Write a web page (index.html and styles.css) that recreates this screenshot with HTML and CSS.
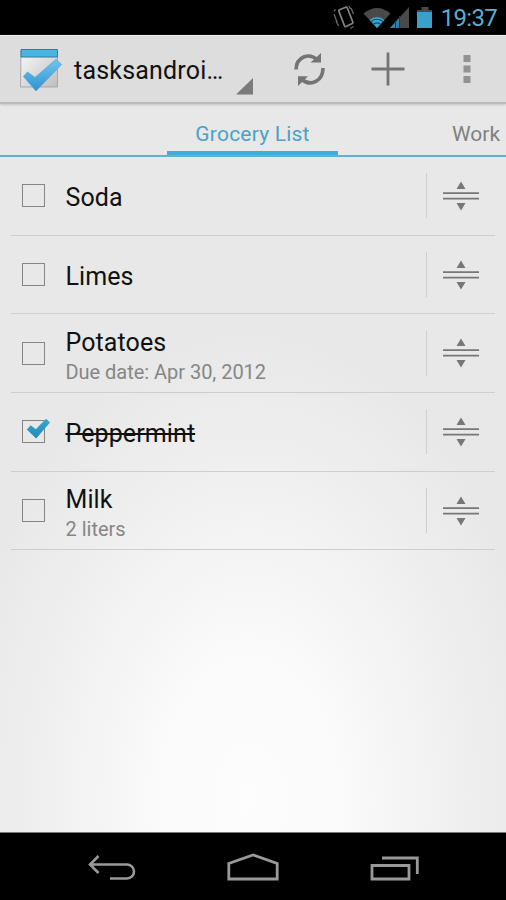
FILE: index.html
```html
<!DOCTYPE html>
<html lang="en">
<head>
<meta charset="utf-8">
<title>Tasks</title>
<link rel="stylesheet" href="styles.css">
</head>
<body>
<svg class="defs" width="0" height="0">
  <defs>
    <linearGradient id="blue" x1="0" y1="0" x2="0" y2="1"><stop offset="0" stop-color="#71c5ee"/><stop offset="1" stop-color="#2f93cf"/></linearGradient>
    <linearGradient id="paper" x1="0" y1="0" x2="1" y2="1"><stop offset="0" stop-color="#fafafa"/><stop offset="1" stop-color="#bdbdbd"/></linearGradient>
    <linearGradient id="tick" x1="0" y1="0" x2="0" y2="1"><stop offset="0" stop-color="#35a9d3"/><stop offset="1" stop-color="#2389b5"/></linearGradient>
    <symbol id="grip" viewBox="0 0 36 30">
      <path d="M18 .5l4.500 7.500h-9zM18 29.500l4.500-7.500h-9z" fill="#777"/>
      <path d="M0 12.200h36M0 17.600h36" stroke="#777" stroke-width="1.700"/>
    </symbol>
  </defs>
</svg>
<div class="phone">
  <header class="status">
    <svg class="status-icons" width="106" height="30" viewBox="330 3 106 30">
      <g fill="none" stroke="#858585">
        <path d="M339.500 9.800l6.200-2.600q1-.4 1.500.6l5.600 14.200q.4 1-.6 1.500l-6.200 2.900q-1 .4-1.500-.6l-5.600-14.500q-.4-1 .6-1.500z" stroke-width="1.700"/>
        <path d="M334 14l3 8M336 21l2.500 5M334 11l1.500-1.500M351 8l2.500 6M349 6l1.500 3M350.500 28.500l3-2" stroke="#686868" stroke-width="1.300"/>
      </g>
      <path d="M363.500 13.500Q377 2.500 390.500 13.500L377 28z" fill="#494949"/>
      <path d="M369.500 20Q377 14 384.500 20L377 28z" fill="#3ca5cf"/>
      <path d="M371 21.500Q377 17 383 21.500M373.500 24.200q3.500-2.600 7 0" fill="none" stroke="#174b60" stroke-width="1.200"/>
      <path d="M409 7v21h-19z" fill="#494949"/>
      <path d="M399.500 17.500V28H390z" fill="#347fa8"/>
      <path d="M395.500 21v7M399.500 16v12" stroke="#163f55" stroke-width="1"/>
      <path d="M421.500 7h7v3h3.500v4h-15v-4h4.500z" fill="#494949"/>
      <path d="M417 12h15v16h-15z" fill="#38a0c9"/>
    </svg>
    <span class="clock">19:37</span>
  </header>

  <div class="actionbar">
    <svg class="logo" width="44" height="46" viewBox="19 46 44 46">
      <path d="M21 50h36.500v36H20.500z" fill="url(#paper)" stroke="#a9a9a9" stroke-width="1"/>
      <path d="M21 48.500h36.500v7.500H21z" fill="#48b5e3" stroke="#35799b" stroke-width="1"/>
      <path d="M23.500 75.500l4-4.500 7.500 5.500L56 58.500l5.500 5L36 90z" fill="url(#blue)" stroke="#4ca5d6" stroke-width=".8" stroke-linejoin="round"/>
    </svg>
    <div class="account">tasksandroi…</div>
    <svg class="spinner" width="17" height="17" viewBox="0 0 17 17"><path d="M17 0v16.500H0z" fill="#7b7b7b"/></svg>
    <svg class="refresh" width="32" height="36" viewBox="294 52 32 36">
      <path d="M296 69.500C296.500 56.500 309 52.500 317 59.500M323 68C323 81 311 87 302 79.500" fill="none" stroke="#747474" stroke-width="3.600"/>
      <path d="M321 53v9.500h-10.500zM298 86v-9.800h10z" fill="#747474"/>
    </svg>
    <svg class="add" width="34" height="34" viewBox="0 0 34 34"><path d="M17 .5v33M.5 17h33" stroke="#747474" stroke-width="2.800"/></svg>
    <svg class="more" width="8" height="29" viewBox="0 0 8 29"><path d="M.5 0h7v7h-7zM.5 10.500h7v7h-7zM.5 21h7v7h-7z" fill="#929292"/></svg>
  </div>

  <nav class="tabs">
    <span class="tab tab-active">Grocery List</span>
    <span class="tab tab-next">Work</span>
  </nav>

  <main class="list">
    <div class="row">
      <span class="box"></span>
      <div class="label"><span class="name">Soda</span></div>
      <span class="handle"><svg width="36" height="30"><use href="#grip"/></svg></span>
    </div>
    <div class="row">
      <span class="box"></span>
      <div class="label"><span class="name">Limes</span></div>
      <span class="handle"><svg width="36" height="30"><use href="#grip"/></svg></span>
    </div>
    <div class="row">
      <span class="box"></span>
      <div class="label two"><span class="name">Potatoes</span><span class="note due">Due date: Apr 30, 2012</span></div>
      <span class="handle"><svg width="36" height="30"><use href="#grip"/></svg></span>
    </div>
    <div class="row">
      <span class="box"><svg class="tick" width="25" height="22" viewBox="0 0 25 22"><path d="M.8 11.500l4-4.300 5 4L20 .8 24 4.500 10.200 20.500z" fill="url(#tick)"/></svg></span>
      <div class="label"><span class="name done">Peppermint</span></div>
      <span class="handle"><svg width="36" height="30"><use href="#grip"/></svg></span>
    </div>
    <div class="row">
      <span class="box"></span>
      <div class="label two"><span class="name">Milk</span><span class="note">2 liters</span></div>
      <span class="handle"><svg width="36" height="30"><use href="#grip"/></svg></span>
    </div>
  </main>

  <footer class="navbar">
    <svg width="48" height="28" viewBox="0 0 48 28"><path d="M2 11.500h37a7 7 0 0 1 0 14H22M10.500 3L2 11.500l8.500 8.500" fill="none" stroke="#999" stroke-width="2.600"/></svg>
    <svg width="52" height="28" viewBox="0 0 52 28"><path d="M1.800 26V10.500L26 2l24.200 8.500V26z" fill="none" stroke="#999" stroke-width="2.800"/></svg>
    <svg width="49" height="28" viewBox="0 0 49 28"><path d="M2 12.500h37V26H2zM12 5h35.300v16" fill="none" stroke="#999" stroke-width="2.800"/></svg>
  </footer>
</div>
</body>
</html>
```
FILE: styles.css
```css
* { box-sizing: border-box; }
body { margin: 0; background: #000; font-family: Roboto, "Liberation Sans", sans-serif; }
svg { display: block; flex: none; }
.defs { position: absolute; }
.phone {
  width: 506px; height: 900px; overflow: hidden;
  display: flex; flex-direction: column;
  background: radial-gradient(ellipse 270px 430px at 250px 800px, #fdfdfd 0%, #fafafa 35%, #f0f0f0 75%, #e8e8e8 110%);
}
.status {
  height: 35px; flex: none; background: #000;
  display: flex; align-items: center; justify-content: flex-end; padding-right: 9px;
}
.status-icons { margin-right: 5px; }
.clock { color: #5aaed2; font-size: 24px; line-height: 34px; letter-spacing: -.7px; }
.actionbar {
  height: 69px; flex: none; display: flex; align-items: flex-start;
  background: #ddd; border-top: 1px solid #eee; border-bottom: 2px solid #bbb;
  box-shadow: 0 1px 2px #c4c4c4;
}
.logo { margin: 11px 0 0 19px; }
.account { width: 162px; margin-left: 11px; padding-top: 19px; font-size: 25px; line-height: 32px; letter-spacing: .2px; color: #111; white-space: nowrap; }
.spinner { margin: 42px 0 0 0; }
.refresh { margin: 16px 0 0 41px; }
.add { margin: 16px 0 0 45px; }
.more { margin: 19px 0 0 58px; }
.tabs {
  height: 53px; flex: none; display: flex; align-items: stretch; padding-left: 167px;
  border-bottom: 2px solid #5cb4d4; overflow: hidden;
}
.tab { font-size: 21px; line-height: 60px; white-space: nowrap; }
.tab-active {
  width: 171px; height: 53px; text-align: center; letter-spacing: .2px; color: #4aa3c7;
  background: linear-gradient(#42aed5, #42aed5) bottom / 100% 6px no-repeat;
}
.tab-next { margin-left: 114px; color: #808080; }
.list { flex: 1; padding: 0 11px; }
.row { height: 78.700px; display: flex; align-items: center; border-bottom: 1.500px solid #cecece; padding-left: 11px; }
.box { width: 23px; height: 23px; flex: none; border: 1.500px solid #858585; position: relative; }
.tick { position: absolute; left: 3px; top: -3px; }
.label { flex: 1; margin-left: 20.500px; padding-top: 4px; display: flex; flex-direction: column; align-items: flex-start; }
.two { padding-top: 7px; }
.name { font-size: 25px; line-height: 30px; letter-spacing: .1px; color: #111; }
.note { font-size: 20px; line-height: 28px; color: #868686; }
.due { letter-spacing: -.03px; }
.done { text-decoration: line-through; text-decoration-thickness: 2px; }
.handle { width: 69px; height: 45px; flex: none; padding-left: 16px; border-left: 1px solid #cfcfcf; display: flex; align-items: center; }
.navbar {
  height: 68px; flex: none; background: #000; border-top: 1px solid #777;
  display: flex; justify-content: space-between; align-items: center; padding: 1px 87px 0 88px;
}
```
